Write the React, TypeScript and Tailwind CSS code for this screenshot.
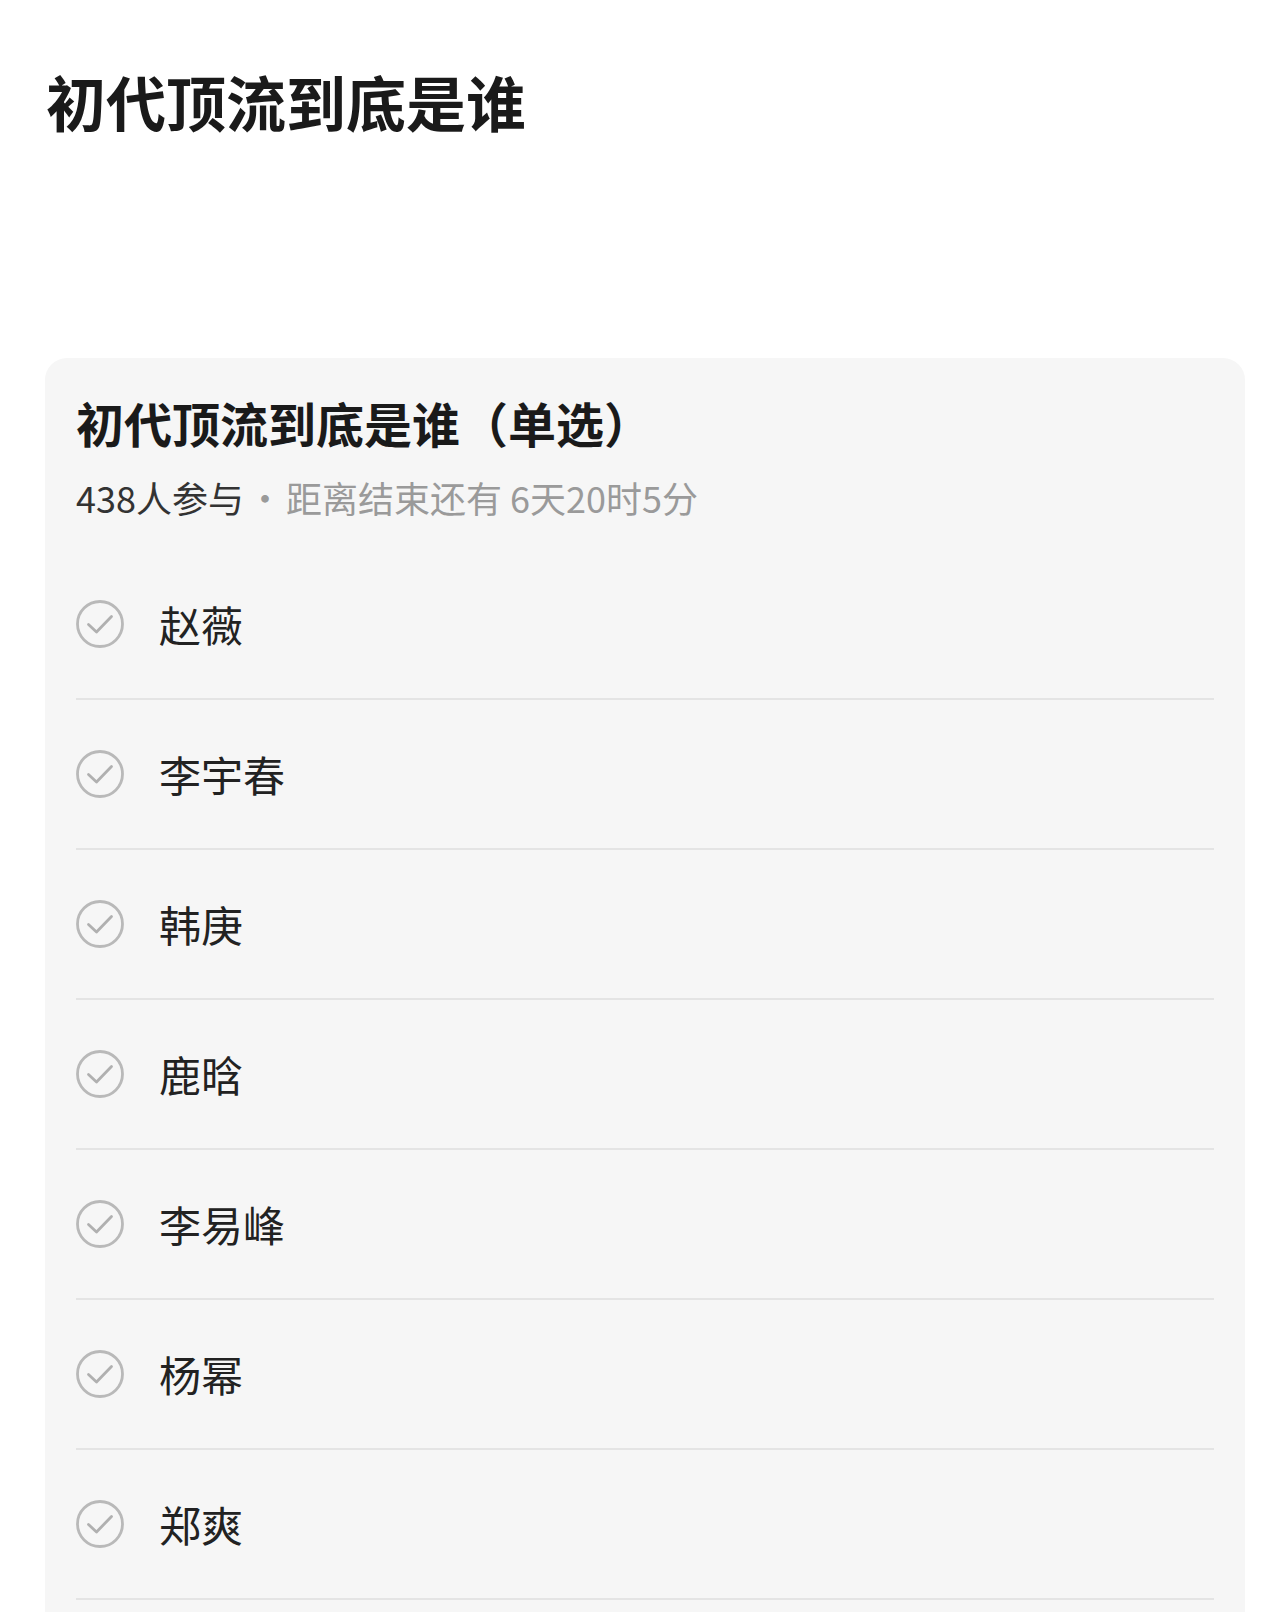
const options = ["赵薇", "李宇春", "韩庚", "鹿晗", "李易峰", "杨幂", "郑爽"];

const CheckCircle = () => (
  <svg width="48" height="48" viewBox="0 0 48 48" fill="none" className="shrink-0">
    <circle cx="24" cy="24" r="22.5" stroke="#b9b9b9" strokeWidth="2.8" />
    <path d="M12.5 24.5 L20.5 32 L35.5 16.5" stroke="#b0b0b0" strokeWidth="2.8" strokeLinecap="round" strokeLinejoin="round" />
  </svg>
);

const App = () => {
  return (
    <div
      className="h-[1612px] w-full overflow-hidden bg-white"
      style={{ fontFamily: '"Noto Sans CJK SC", "Noto Sans", sans-serif' }}
    >
      {/* Page title */}
      <div className="px-[46px] pt-[66px]">
        <h1 className="text-[60px] font-bold leading-[70px] text-[#1a1a1a]">初代顶流到底是谁</h1>
      </div>

      {/* Poll card */}
      <div className="ml-[45px] mt-[222px] min-h-[1300px] w-[1200px] rounded-[22px] bg-[#f6f6f6] px-[31px] pt-[34px]">
        <h2 className="text-[48px] font-bold leading-[60px] text-[#1a1a1a]">初代顶流到底是谁（单选）</h2>
        <div className="mt-[21px] text-[36px] leading-[48px] text-[#9a9a9a]">
          <span className="text-[#333333]">438人参与</span>
          <span className="mx-[3px]">·</span>
          距离结束还有 6天20时5分
        </div>

        <div className="mt-[29px]">
          {options.map((name) => (
            <div key={name} className="flex h-[150px] items-center gap-[35px] border-b-2 border-[#e4e4e4]">
              <CheckCircle />
              <span className="text-[42px] leading-[56px] text-[#222222]">{name}</span>
            </div>
          ))}
        </div>
      </div>
    </div>
  );
};

export default App;
